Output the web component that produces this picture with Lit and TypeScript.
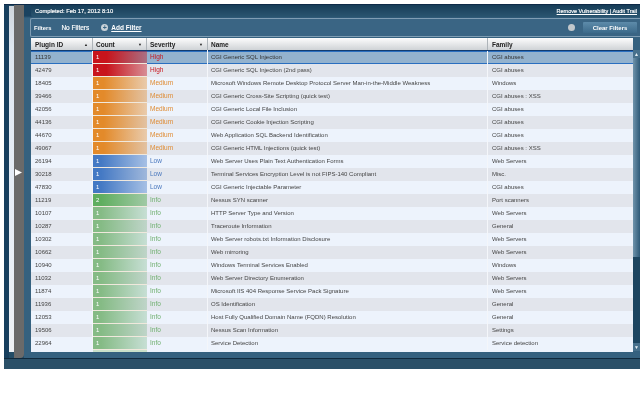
import { LitElement, html, css } from "lit";
import { customElement } from "lit/decorators.js";

const rows: [string, string, string, string, string][] = [
  ["11139", "1", "High", "CGI Generic SQL Injection", "CGI abuses"],
  ["42479", "1", "High", "CGI Generic SQL Injection (2nd pass)", "CGI abuses"],
  ["18405", "1", "Medium", "Microsoft Windows Remote Desktop Protocol Server Man-in-the-Middle Weakness", "Windows"],
  ["39466", "1", "Medium", "CGI Generic Cross-Site Scripting (quick test)", "CGI abuses : XSS"],
  ["42056", "1", "Medium", "CGI Generic Local File Inclusion", "CGI abuses"],
  ["44136", "1", "Medium", "CGI Generic Cookie Injection Scripting", "CGI abuses"],
  ["44670", "1", "Medium", "Web Application SQL Backend Identification", "CGI abuses"],
  ["49067", "1", "Medium", "CGI Generic HTML Injections (quick test)", "CGI abuses : XSS"],
  ["26194", "1", "Low", "Web Server Uses Plain Text Authentication Forms", "Web Servers"],
  ["30218", "1", "Low", "Terminal Services Encryption Level is not FIPS-140 Compliant", "Misc."],
  ["47830", "1", "Low", "CGI Generic Injectable Parameter", "CGI abuses"],
  ["11219", "2", "Info", "Nessus SYN scanner", "Port scanners"],
  ["10107", "1", "Info", "HTTP Server Type and Version", "Web Servers"],
  ["10287", "1", "Info", "Traceroute Information", "General"],
  ["10302", "1", "Info", "Web Server robots.txt Information Disclosure", "Web Servers"],
  ["10662", "1", "Info", "Web mirroring", "Web Servers"],
  ["10940", "1", "Info", "Windows Terminal Services Enabled", "Windows"],
  ["11032", "1", "Info", "Web Server Directory Enumeration", "Web Servers"],
  ["11874", "1", "Info", "Microsoft IIS 404 Response Service Pack Signature", "Web Servers"],
  ["11936", "1", "Info", "OS Identification", "General"],
  ["12053", "1", "Info", "Host Fully Qualified Domain Name (FQDN) Resolution", "General"],
  ["19506", "1", "Info", "Nessus Scan Information", "Settings"],
  ["22964", "1", "Info", "Service Detection", "Service detection"],
];

@customElement("app-root")
export class AppRoot extends LitElement {
  static styles = css`
    :host {
      display: block;
      width: 640px;
      height: 420px;
      background: #fff;
      font-family: "Liberation Sans", Arial, sans-serif;
      font-size: 6px;
      color: #333;
      overflow: hidden;
      padding-top: 4px;
      box-sizing: border-box;
    }
    .app {
      margin-left: 4px;
      height: 365px;
      background: #234c66;
      border-top: 1px solid #0e2a48;
      box-sizing: border-box;
      display: flex;
      flex-direction: column;
      filter: blur(0.4px);
    }
    .main { display: flex; height: 353px; }
    .rail { width: 5px; background: #173f5e; }
    .paper {
      width: 5px;
      margin-top: 1px;
      height: 346px;
      background: linear-gradient(#cfd5dc, #dfe7f0 12%, #e6edf6 50%, #eef1f5);
    }
    .handle {
      width: 10px;
      height: 353px;
      background: #6a6a6a;
      border-radius: 0 0 4px 0;
      display: flex;
      align-items: center;
    }
    .handle svg { display: block; margin-left: 1px; margin-top: -18px; }
    .content {
      flex: 1;
      min-width: 0;
      padding-left: 7px;
      background: linear-gradient(#1a4260 0, #1a4260 11px, #35617f 13px);
    }
    .top {
      height: 12px;
      background: linear-gradient(#173d58, #2a5570);
      color: #fff;
      font-size: 5.8px;
      -webkit-text-stroke: 0.15px #fff;
      display: flex;
      align-items: center;
      justify-content: space-between;
      padding: 0 0 0 4px;
      border-radius: 0 0 0 3px;
    }
    .links { font-size: 5.5px; text-decoration: underline; padding-right: 3px; }
    .filters {
      height: 17px;
      margin: 1px 0 0 -1px;
      background: #3a6584;
      border: 1px solid #7f9db3;
      border-right: none;
      border-radius: 2px 0 0 2px;
      color: #fff;
      display: flex;
      align-items: center;
      font-weight: bold;
      font-size: 5.8px;
    }
    .filters .label { margin-left: 3px; }
    .filters .none { margin-left: 10px; font-size: 6.5px; -webkit-text-stroke: 0.15px #fff; font-weight: normal; }
    .plus {
      width: 7px; height: 7px; border-radius: 50%;
      background: #c9d2d8; color: #3a6584;
      margin-left: 12px;
      display: flex; align-items: center; justify-content: center;
      font-size: 7px; line-height: 7px;
    }
    .add { margin-left: 3px; text-decoration: underline; font-size: 6.5px; }
    .spacer { flex: 1; }
    .dot {
      width: 7px; height: 7px; border-radius: 50%;
      background: #c2c8cc; margin-right: 8px;
    }
    .clear {
      width: 54px; height: 11px; margin-right: 3px;
      background: linear-gradient(#5d8baa, #3c6a8a);
      border-radius: 1px;
      font-size: 6px;
      display: flex; align-items: center; justify-content: center;
    }
    .grid-wrap { display: flex; margin-top: 1px; }
    .grid { width: 602px; }
    .head, .row {
      display: grid;
      grid-template-columns: 62px 54px 61px 280px 145px;
    }
    .head {
      height: 13px;
      background: linear-gradient(#fdfdfd, #cfd3d6);
      border-bottom: 1px solid #123c70;
      box-sizing: border-box;
      font-weight: bold;
      font-size: 6.5px;
      color: #222;
    }
    .head div {
      display: flex; align-items: center; justify-content: space-between;
      padding: 0 4px 0 3px;
      border-right: 1px solid #aeb4b9;
      box-sizing: border-box;
    }
    .head div:first-child, .head div:last-child { padding-left: 4px; }
    .head div:last-child { border-right: none; }
    .head i { font-style: normal; font-size: 4px; }
    .row { height: 13px; line-height: 13px; background: #edf3fc; color: #444; }
    .row.alt { background: #e2e5ec; }
    .row.sel { background: #93b2ce; color: #333; box-shadow: inset 0 1px 0 #2a6fc0, inset 0 -1px 0 #2a6fc0; }
    .row > div { padding: 0 3px; white-space: nowrap; overflow: hidden; border-right: 1px solid #f4f6fa; box-sizing: border-box; }
    .row > div:first-child, .row > div:last-child { padding-left: 4px; }
    .row > div:last-child { border-right: none; }
    .row .count { color: #fff; border-bottom: 1px solid #f0e8dc; border-right: none; }
    .High .count { background: linear-gradient(90deg, #c8141c 25%, rgba(200, 20, 28, 0.42)); }
    .Medium .count { background: linear-gradient(90deg, #e38a2a 20%, rgba(227, 138, 42, 0.38)); }
    .Low .count { background: linear-gradient(90deg, #4479c4 15%, rgba(68, 121, 196, 0.42)); }
    .Info .count { background: linear-gradient(90deg, #85bb85 15%, rgba(100, 170, 110, 0.28)); }
    .Info.two .count { background: linear-gradient(90deg, #5fae5f 15%, rgba(95, 174, 95, 0.5)); }
    .row .sev { margin-top: -1px; line-height: 13px; font-size: 6.5px; }
    .High .sev { color: #c8141c; }
    .Medium .sev { color: #df8a30; }
    .Low .sev { color: #4a78be; }
    .Info .sev { color: #70b070; }
    .scroll {
      flex: 1;
      margin-top: 12px;
      background: #1d4560;
      display: flex;
      flex-direction: column;
      height: 301px;
      color: #e4edf3;
      font-size: 5px;
      line-height: 8px;
    }
    .btn { display: block; height: 8px; text-align: center; background: #47708c; }
    .thumb { height: 199px; background: linear-gradient(90deg, #6f93ab, #2f5a78); }
    .track { flex: 1; }
    .stub { height: 2px; width: 602px; display: grid; grid-template-columns: 62px 54px; background: #edf3fc; }
    .stub b { grid-column: 2; background: #c9e0c9; }
    .foot { height: 10px; border-top: 1px solid #10293c; background: #2b5068; }
  `;

  render() {
    return html`
      <div class="app">
        <div class="main">
          <div class="rail"></div>
          <div class="paper"></div>
          <div class="handle">
            <svg width="8" height="8" viewBox="0 0 8 8"><polygon points="0,0 7,3.5 0,7" fill="#fff" /></svg>
          </div>
          <div class="content">
            <div class="top">
              <span>Completed: Feb 17, 2012 8:10</span>
              <span class="links">Remove Vulnerability | Audit Trail</span>
            </div>
            <div class="filters">
              <span class="label">Filters</span>
              <span class="none">No Filters</span>
              <span class="plus">+</span>
              <span class="add">Add Filter</span>
              <span class="spacer"></span>
              <span class="dot"></span>
              <span class="clear">Clear Filters</span>
            </div>
            <div class="grid-wrap">
              <div class="grid">
                <div class="head">
                  <div>Plugin ID <i>▲</i></div>
                  <div>Count <i>▼</i></div>
                  <div>Severity <i>▼</i></div>
                  <div>Name</div>
                  <div>Family</div>
                </div>
                ${rows.map(
                  (r, i) => html`
                    <div class="row ${r[2]} ${r[1] === "2" ? "two" : ""} ${i === 0 ? "sel" : i % 2 ? "alt" : ""}">
                      <div>${r[0]}</div>
                      <div class="count">${r[1]}</div>
                      <div class="sev">${r[2]}</div>
                      <div>${r[3]}</div>
                      <div>${r[4]}</div>
                    </div>
                  `
                )}
                <div class="stub"><b></b></div>
              </div>
              <div class="scroll">
                <span class="btn">▲</span>
                <div class="thumb"></div>
                <div class="track"></div>
                <span class="btn">▼</span>
              </div>
            </div>
          </div>
        </div>
        <div class="foot"></div>
      </div>
    `;
  }
}
